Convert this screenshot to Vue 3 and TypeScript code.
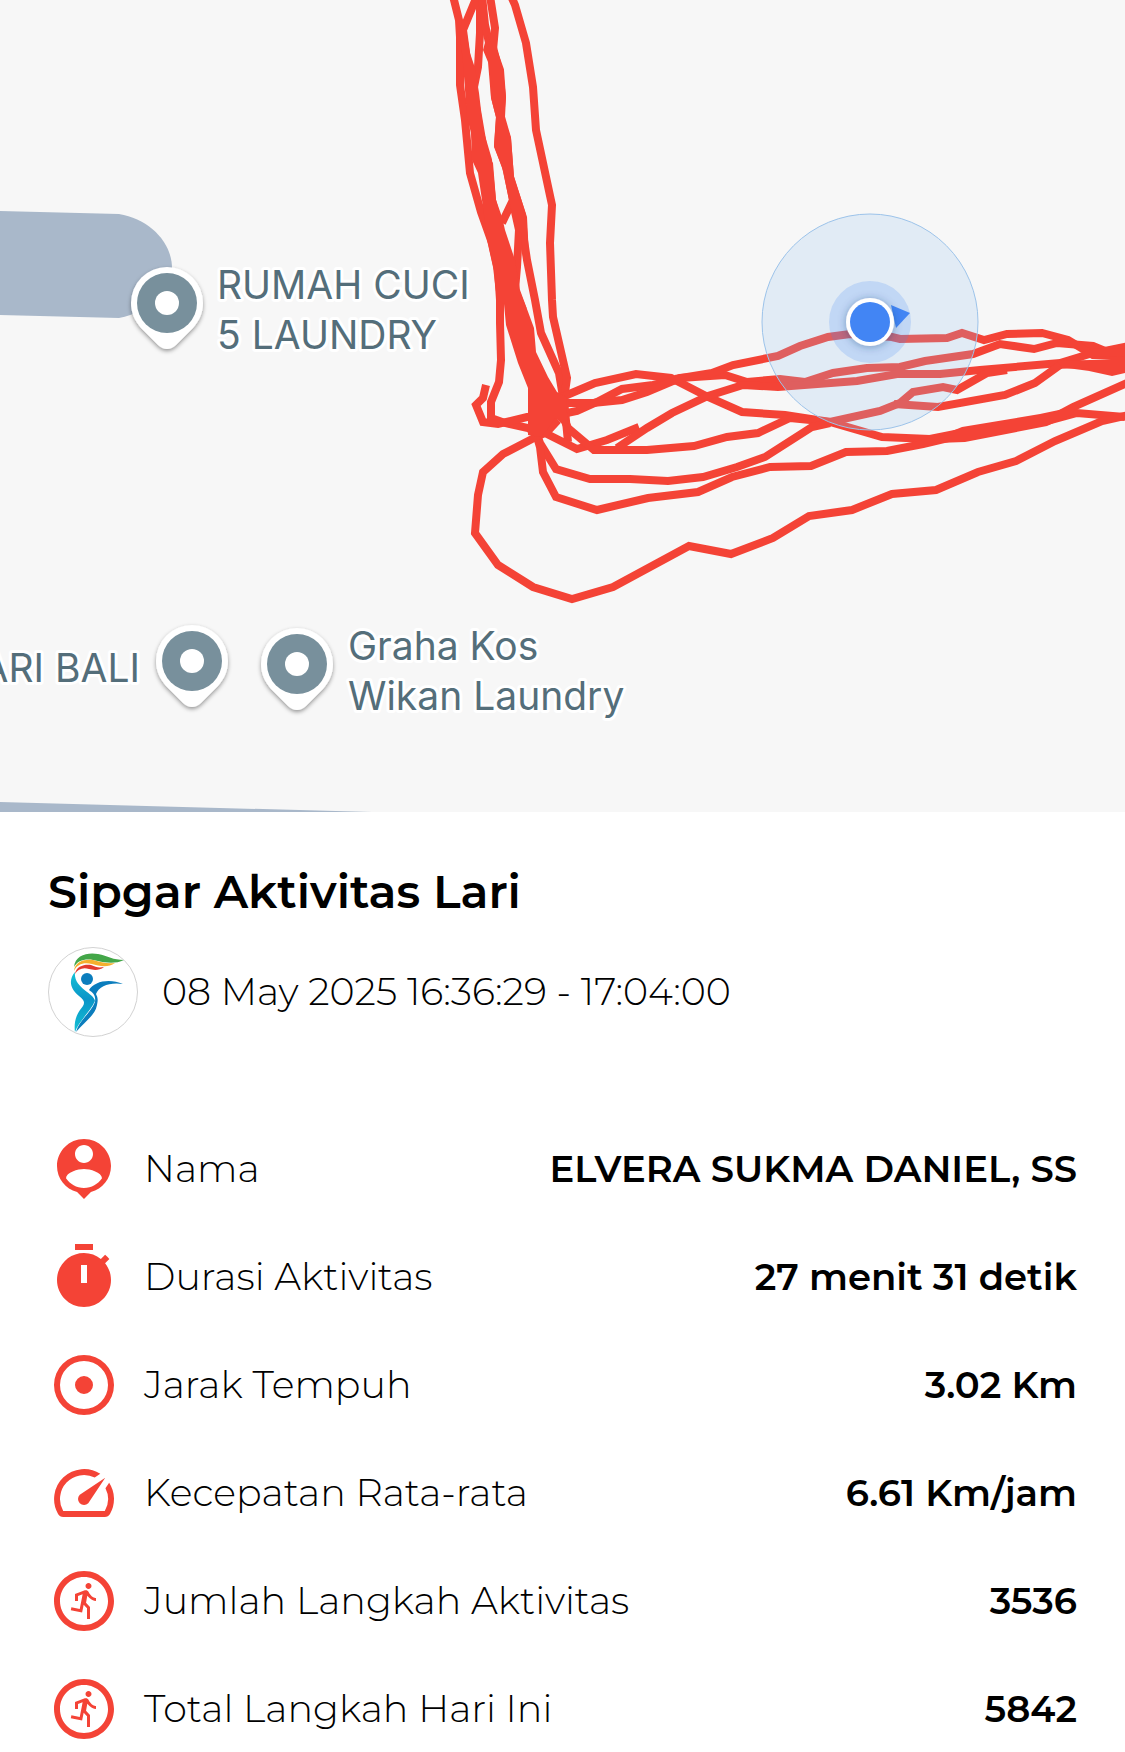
<script setup lang="ts">
type IconName = 'person' | 'timer' | 'target' | 'speed' | 'run'

interface Stat {
  icon: IconName
  label: string
  value: string
}

interface Pin {
  x: number
  y: number
}

const stats: Stat[] = [
  { icon: 'person', label: 'Nama', value: 'ELVERA SUKMA DANIEL, SS' },
  { icon: 'timer', label: 'Durasi Aktivitas', value: '27 menit 31 detik' },
  { icon: 'target', label: 'Jarak Tempuh', value: '3.02 Km' },
  { icon: 'speed', label: 'Kecepatan Rata-rata', value: '6.61 Km/jam' },
  { icon: 'run', label: 'Jumlah Langkah Aktivitas', value: '3536' },
  { icon: 'run', label: 'Total Langkah Hari Ini', value: '5842' },
]

const iconPaths: Record<IconName, string> = {
  person:
    'M12 2c-4.97 0-9 4.03-9 9 0 4.17 2.84 7.67 6.69 8.69L12 22l2.31-2.31C18.16 18.67 21 15.17 21 11c0-4.97-4.03-9-9-9zm0 2c1.66 0 3 1.34 3 3s-1.34 3-3 3-3-1.34-3-3 1.34-3 3-3zm0 14.3c-2.5 0-4.71-1.28-6-3.22.03-1.99 4-3.08 6-3.08 1.99 0 5.97 1.09 6 3.08-1.29 1.94-3.5 3.22-6 3.22z',
  timer:
    'M15 1H9v2h6V1zm-4 13h2V8h-2v6zm8.03-6.61l1.42-1.42c-.43-.51-.9-.99-1.41-1.41l-1.42 1.42C16.07 4.74 14.12 4 12 4c-4.97 0-9 4.03-9 9s4.02 9 9 9 9-4.03 9-9c0-2.12-.74-4.07-1.97-5.61z',
  target:
    'M12 2a10 10 0 1 0 0 20 10 10 0 1 0 0-20zm0 18a8 8 0 1 1 0-16 8 8 0 1 1 0 16zm3-8a3 3 0 1 1-6 0 3 3 0 1 1 6 0z',
  speed:
    'M20.38 8.57l-1.23 1.85a8 8 0 0 1-.22 7.58H5.07A8 8 0 0 1 15.58 6.85l1.85-1.23A10 10 0 0 0 3.35 19a2 2 0 0 0 1.72 1h13.85a2 2 0 0 0 1.74-1 10 10 0 0 0-.27-10.44zm-9.79 6.84a2 2 0 0 0 2.83 0l5.66-8.49-8.49 5.66a2 2 0 0 0 0 2.83z',
  run:
    'M12 2C6.48 2 2 6.48 2 12s4.48 10 10 10 10-4.48 10-10S17.52 2 12 2zm0 18c-4.41 0-8-3.59-8-8s3.59-8 8-8 8 3.59 8 8-3.59 8-8 8zM13.5 6c.55 0 1 .45 1 1s-.45 1-1 1-1-.45-1-1 .45-1 1-1zM16 12c-.7 0-2.01-.54-2.91-1.76l-.41 2.35L14 14.03V18h-1v-3.58l-1.11-1.21-.52 2.64-3.77-.77.2-.98 2.78.57.96-4.89-1.54.57V12H9V9.65l3.28-1.21c.49-.18 1.03.06 1.26.53C14.37 10.67 15.59 11 16 11v1z',
}

const pins: Pin[] = [
  { x: 167, y: 303 },
  { x: 192, y: 661 },
  { x: 297, y: 664 },
]

const tracks: string[] = [
  '453,-4 459,20 460,37 460,85 465,120 470,173 481,212 492,243 498,270 500,300 500,323 501,360 499,382 491,402 491,418 505,423 528,428 542,436',
  '477,-4 463,30 467,60 474,93 480,133 488,160 492,200 500,230',
  '480,-4 480,33 478,67 472,97 476,140 486,180',
  '482,-4 485,25 490,47 494,62 495,97 500,117 498,145 507,170 513,200 502,223',
  '490,-4 495,28 493,50 500,70 502,97 501,117 507,138 510,177 522,215 524,240 527,260 535,300 541,333 559,373 563,397',
  '511,-4 515,5 526,43 533,87 536,130 552,205 550,243 552,300 553,317 567,378 564,400 568,442',
  '513,203 519,230 517,267 515,290 523,310',
  '486,385 483,398 476,405 483,422 498,424 527,417 553,416 577,411 597,402 622,389 653,385 680,379',
  '560,398 595,383 636,374 671,378 708,397 742,412 785,415 830,422 882,437 930,439 960,433 1047,421 1077,413 1125,417',
  '560,403 593,403 622,400 647,392 680,378 725,375 747,382 780,379 805,382 833,373 867,368 900,367 925,361 973,354 1000,344 1034,349 1057,343 1093,346 1105,351 1129,346',
  '675,379 712,373 733,365 778,356 800,346 828,337 850,334 892,337 900,339 947,338 962,333 984,340 1007,334 1042,333 1068,340 1093,355 1129,357',
  '639,427 607,440 577,449 545,433',
  '617,448 647,428 672,413 708,396 743,385 778,387 857,381 897,374 940,374 980,370 1060,363 1090,367 1112,372 1129,368',
  '1060,363 1093,353 1129,352',
  '1050,365 1090,364 1129,364',
  '562,415 568,428 594,450 647,450 694,446 727,437 758,433 790,418 830,422 880,411 900,403 913,392 943,387 957,390 987,373 1007,370',
  '894,404 938,407 1005,395 1035,383 1060,365',
  '532,420 540,443 556,469 590,479 630,479 668,481 703,477 737,467 765,457 812,427 830,423',
  '535,430 540,447 543,472 556,497 597,510 648,498 698,492 732,477 770,467 811,466 846,452 887,451 923,444 965,434 1047,421 1073,407 1129,382',
  '558,420 547,432 532,439 503,454 483,472 478,495 475,533 498,565 533,587 572,599 613,587 689,546 731,554 773,538 809,516 852,510 892,494 936,490 978,472 1016,461 1055,441 1102,421 1129,415',
]

// Areas where many laps overlap into one solid band.
const bands: string[] = [
  '460,35 467,35 470,53 475,68 479,93 481,110 489,157 493,163 496,200 502,217 505,230 515,260 520,290 534,328 536,352 548,377 557,392 566,397 568,428 555,418 547,430 540,437 528,435 528,388 518,363 506,325 504,304 497,300 493,267 487,240 483,207 478,173 472,160 471,133 467,117 463,63',
  '487,35 493,47 497,47 503,70 506,97 504,118 511,138 514,177 527,217 529,257 523,257 521,233 516,230 509,200 502,167 494,147 496,117 491,98 488,62 483,50',
  '930,436 940,436 962,427 1040,414 1073,407 1073,414 1047,426 965,442 937,443',
]
</script>

<template>
  <main class="activity">
    <svg class="map" viewBox="0 0 1125 812" role="img" aria-label="Peta rute lari">
      <defs>
        <filter id="pin-shadow" x="-30%" y="-30%" width="160%" height="160%">
          <feDropShadow dx="0" dy="2" stdDeviation="2" flood-color="#000" flood-opacity="0.4" />
        </filter>
        <filter id="dot-shadow" x="-50%" y="-50%" width="200%" height="200%">
          <feDropShadow dx="0" dy="1" stdDeviation="4" flood-color="#1c3a70" flood-opacity="0.4" />
        </filter>
      </defs>

      <path class="road" d="M0 211 L119 214 C150 219 172 243 172 268 C172 292 150 312 119 318 L0 315Z" />
      <path class="road" d="M0 802 L372 812 H0Z" />

      <g class="places">
        <text x="217" y="299">RUMAH CUCI</text>
        <text x="217" y="349">5 LAUNDRY</text>
        <text x="140" y="682" text-anchor="end">ARI BALI</text>
        <text x="348" y="660">Graha Kos</text>
        <text x="348" y="710">Wikan Laundry</text>
      </g>

      <g v-for="pin in pins" :key="pin.x" :transform="`translate(${pin.x} ${pin.y})`">
        <path
          d="M-36 0A36 36 0 1 1 36 0C36 10 32 18 26 25L9 42Q0 50-9 42L-26 25C-32 18-36 10-36 0Z"
          fill="#fff"
          filter="url(#pin-shadow)"
        />
        <circle r="30" fill="#78909c" />
        <circle r="12" fill="#fff" />
      </g>

      <g class="tracks">
        <polyline v-for="points in tracks" :key="points" :points="points" />
        <polygon v-for="points in bands" :key="points" :points="points" />
      </g>

      <circle class="accuracy" cx="870" cy="322" r="108" />
      <circle cx="870" cy="322" r="41" fill="#4285f4" fill-opacity="0.2" />
      <path d="M891 305L910 313L896 328Z" fill="#4285f4" />
      <circle cx="870" cy="322" r="24" fill="#fff" filter="url(#dot-shadow)" />
      <circle cx="870" cy="322" r="20" fill="#4285f4" />
    </svg>

    <section class="details">
      <h1>Sipgar Aktivitas Lari</h1>

      <div class="session">
        <svg class="logo" viewBox="0 0 90 90" aria-hidden="true">
          <defs>
            <linearGradient id="body-cyan" x1="0" y1="0" x2="0" y2="1">
              <stop offset="0" stop-color="#16c3d6" />
              <stop offset="0.45" stop-color="#0a95c8" />
              <stop offset="1" stop-color="#13c0d4" />
            </linearGradient>
          </defs>
          <circle cx="45" cy="45" r="44.5" fill="#fff" stroke="#d2d2d2" />
          <path d="M26 20C27 8 40 5 50 7C60 9 65 13 76 13C68 17 58 16 50 14C40 11 30 12 26 20Z" fill="#43a648" />
          <path d="M26 24C27 14 37 12 45 13C53 15 58 17 67 16C60 21 51 19 44 17C36 15 29 17 26 24Z" fill="#f5b02e" />
          <path d="M27 27C28 19 37 17 43 18C48 20 50 21 56 20C51 24 45 23 41 22C35 20 30 22 27 27Z" fill="#e23a2e" />
          <path d="M27 25C21 32 21 41 31 49C39 55 36 58 32 63C27 70 26 78 27 85C31 74 42 65 47 54C46 46 25 41 27 25Z" fill="url(#body-cyan)" />
          <path d="M75 37C62 31 46 34 41 43C45 46 48 48 47 55C43 66 31 73 28 85C36 75 47 69 49 58C50 53 50 51 48 47C51 39 62 35 75 37Z" fill="#0b7dbd" />
          <circle cx="39" cy="32" r="6" fill="#0b7dbd" />
        </svg>
        <time datetime="2025-05-08T16:36:29">08 May 2025 16:36:29 - 17:04:00</time>
      </div>

      <dl class="stats">
        <div v-for="stat in stats" :key="stat.label" class="stat">
          <dt>
            <svg class="icon" viewBox="0 0 24 24" aria-hidden="true">
              <path :d="iconPaths[stat.icon]" fill-rule="evenodd" />
            </svg>
            {{ stat.label }}
          </dt>
          <dd>{{ stat.value }}</dd>
        </div>
      </dl>
    </section>
  </main>
</template>

<style>
body {
  margin: 0;
  background: #fff;
}
</style>

<style scoped>
.activity {
  overflow: hidden;
  color: #000;
  background: #fff;
  font-family: Montserrat, Inter, sans-serif;
}

.map {
  display: block;
  width: 100%;
  background: #f7f7f7;
}

.road {
  fill: #a9b8ca;
}

.places {
  fill: #546e7a;
  stroke: #fff;
  stroke-width: 6px;
  stroke-linejoin: round;
  paint-order: stroke;
  font-family: Inter, sans-serif;
  font-size: 39px;
}

.tracks polyline {
  fill: none;
  stroke: #f44336;
  stroke-width: 8px;
}

.tracks polygon {
  fill: #f44336;
}

.accuracy {
  fill: rgba(150, 197, 240, 0.22);
  stroke: #9cc3ea;
  stroke-width: 1px;
}

.details {
  padding: 52px 48px 0;
}

h1 {
  margin: 0;
  font-size: 46px;
  line-height: 56px;
  font-weight: 600;
}

.session {
  display: flex;
  align-items: center;
  gap: 24px;
  margin-top: 27px;
  font-size: 38px;
  line-height: 48px;
  font-weight: 300;
}

.logo {
  flex: none;
  width: 90px;
  height: 90px;
}

.stats {
  display: flex;
  flex-direction: column;
  gap: 36px;
  margin: 96px 0 0;
  font-size: 38px;
  line-height: 48px;
}

.stat {
  display: flex;
  align-items: center;
  justify-content: space-between;
}

dt {
  display: flex;
  align-items: center;
  gap: 24px;
  font-weight: 300;
}

dd {
  margin: 0;
  font-size: 37px;
  font-weight: 600;
  text-align: right;
}

.icon {
  flex: none;
  width: 72px;
  height: 72px;
  fill: #f44336;
}
</style>
